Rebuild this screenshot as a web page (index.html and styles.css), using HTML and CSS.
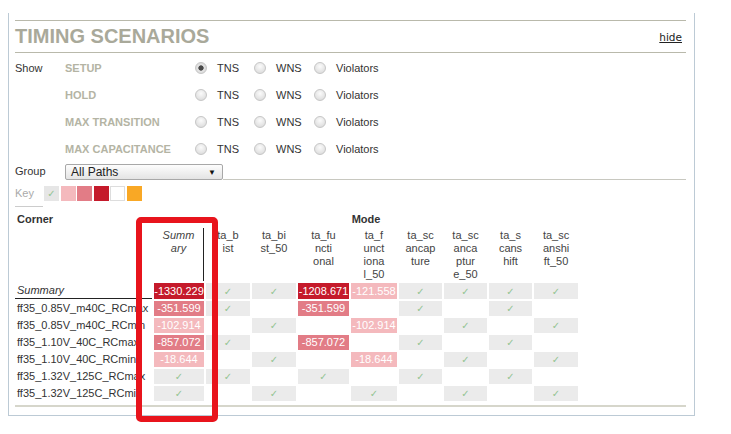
FILE: index.html
```html
<!DOCTYPE html>
<html lang="en">
<head>
    <meta charset="UTF-8">
    <title>Timing Scenarios</title>
    <link rel="stylesheet" href="styles.css">
</head>
<body>
    <div class="panel">
        <div class="title-bar">
            <h1>TIMING SCENARIOS</h1>
            <a class="hide" href="#">hide</a>
        </div>

        <div class="show-grid">
            <span>Show</span>
            <span class="scen">SETUP</span>
            <label class="opt"><input type="radio" name="setup" checked>TNS</label>
            <label class="opt"><input type="radio" name="setup">WNS</label>
            <label class="opt"><input type="radio" name="setup">Violators</label>

            <span></span>
            <span class="scen">HOLD</span>
            <label class="opt"><input type="radio" name="hold">TNS</label>
            <label class="opt"><input type="radio" name="hold">WNS</label>
            <label class="opt"><input type="radio" name="hold">Violators</label>

            <span></span>
            <span class="scen">MAX TRANSITION</span>
            <label class="opt"><input type="radio" name="tran">TNS</label>
            <label class="opt"><input type="radio" name="tran">WNS</label>
            <label class="opt"><input type="radio" name="tran">Violators</label>

            <span></span>
            <span class="scen">MAX CAPACITANCE</span>
            <label class="opt"><input type="radio" name="cap">TNS</label>
            <label class="opt"><input type="radio" name="cap">WNS</label>
            <label class="opt"><input type="radio" name="cap">Violators</label>
        </div>

        <div class="group-row">
            <span class="lbl">Group</span>
            <div class="select"><span>All Paths</span><span class="arrow">▼</span></div>
            <span class="fill"></span>
        </div>

        <div class="key-row">
            <span class="key-lbl">Key</span>
            <div class="swatches">
                <span class="sw ok">✓</span>
                <span class="sw l"></span>
                <span class="sw m"></span>
                <span class="sw d"></span>
                <span class="sw w"></span>
                <span class="sw o"></span>
            </div>
        </div>

        <table class="grid">
            <colgroup>
                <col style="width:137px"><col style="width:50px"><col style="width:44px"><col style="width:44px">
                <col style="width:51px"><col style="width:46px"><col style="width:43px"><col style="width:43px">
                <col style="width:43px"><col style="width:44px">
            </colgroup>
            <tr class="top-row">
                <th class="corner-h">Corner</th>
                <th colspan="9">Mode</th>
            </tr>
            <tr class="head-row">
                <th></th>
                <th class="sum-h">Summ<br>ary</th>
                <th>ta_b<br>ist</th>
                <th>ta_bi<br>st_50</th>
                <th>ta_fu<br>ncti<br>onal</th>
                <th>ta_f<br>unct<br>iona<br>l_50</th>
                <th>ta_sc<br>ancap<br>ture</th>
                <th>ta_sc<br>anca<br>ptur<br>e_50</th>
                <th>ta_s<br>cans<br>hift</th>
                <th>ta_sc<br>anshi<br>ft_50</th>
            </tr>
            <tr class="sum-row">
                <td class="name">Summary</td>
                <td class="d">-1330.229</td><td class="ok">✓</td><td class="ok">✓</td>
                <td class="d">-1208.671</td><td class="l">-121.558</td><td class="ok">✓</td>
                <td class="ok">✓</td><td class="ok">✓</td><td class="ok">✓</td>
            </tr>
            <tr>
                <td class="name">ff35_0.85V_m40C_RCmax</td>
                <td class="m">-351.599</td><td class="ok">✓</td><td></td>
                <td class="m">-351.599</td><td></td><td class="ok">✓</td>
                <td></td><td class="ok">✓</td><td></td>
            </tr>
            <tr>
                <td class="name">ff35_0.85V_m40C_RCmin</td>
                <td class="l">-102.914</td><td></td><td class="ok">✓</td>
                <td></td><td class="l">-102.914</td><td></td>
                <td class="ok">✓</td><td></td><td class="ok">✓</td>
            </tr>
            <tr>
                <td class="name">ff35_1.10V_40C_RCmax</td>
                <td class="m">-857.072</td><td class="ok">✓</td><td></td>
                <td class="m">-857.072</td><td></td><td class="ok">✓</td>
                <td></td><td class="ok">✓</td><td></td>
            </tr>
            <tr>
                <td class="name">ff35_1.10V_40C_RCmin</td>
                <td class="l">-18.644</td><td></td><td class="ok">✓</td>
                <td></td><td class="l">-18.644</td><td></td>
                <td class="ok">✓</td><td></td><td class="ok">✓</td>
            </tr>
            <tr>
                <td class="name">ff35_1.32V_125C_RCmax</td>
                <td class="ok">✓</td><td class="ok">✓</td><td></td>
                <td class="ok">✓</td><td></td><td class="ok">✓</td>
                <td></td><td class="ok">✓</td><td></td>
            </tr>
            <tr>
                <td class="name">ff35_1.32V_125C_RCmin</td>
                <td class="ok">✓</td><td></td><td class="ok">✓</td>
                <td></td><td class="ok">✓</td><td></td>
                <td class="ok">✓</td><td></td><td class="ok">✓</td>
            </tr>
        </table>

        <div class="foot-line"></div>
    </div>

    <!-- annotation box round the Summary column -->
    <div class="mark"></div>
</body>
</html>
```

FILE: styles.css
```css
body {
    margin: 0;
    font-family: 'Liberation Sans', Arial, sans-serif;
    font-size: 11px;
    color: #333;
    background: #fff;
}

.panel {
    box-sizing: border-box;
    margin: 13px 0 0 8px;
    width: 687px;
    height: 403px;
    padding: 7px 8px 0 6px;
    border: 1px solid #bccad5;
    border-top: none;
}

.title-bar {
    display: flex;
    justify-content: space-between;
    align-items: center;
    height: 31px;
    border-top: 1px solid #b9b9ab;
    border-bottom: 1px solid #b9b9ab;
}

h1 {
    margin: 0;
    font-size: 20px;
    line-height: 31px;
    font-weight: bold;
    color: #a9a99a;
}

.hide {
    font-family: 'DejaVu Sans', sans-serif;
    font-size: 10.5px;
    color: #222;
    margin-right: 4px;
}

.show-grid {
    display: grid;
    grid-template-columns: 50px 130px 59px 60px auto;
    grid-auto-rows: 27px;
    align-items: center;
    padding-top: 1px;
}

.scen {
    font-weight: bold;
    color: #b4b4a4;
}

.opt {
    display: flex;
    align-items: center;
    color: #333;
}

.opt input {
    appearance: none;
    width: 12px;
    height: 12px;
    margin: 0 10px 0 0;
    box-sizing: border-box;
    border-radius: 50%;
    border: 1px solid #c6c6c6;
    background: radial-gradient(circle at 50% 35%, #fbfbfb, #d6d6d6);
}

.opt input:checked {
    background: radial-gradient(circle, #4a4a4a 0 2.3px, #e6e6e6 3px, #cfcfcf);
}

.group-row {
    display: flex;
    align-items: flex-end;
    height: 18px;
}

.group-row .lbl {
    width: 50px;
    align-self: center;
}

.select {
    width: 158px;
    height: 16px;
    box-sizing: border-box;
    display: flex;
    justify-content: space-between;
    align-items: center;
    padding: 0 6px 0 5px;
    border: 1px solid #a8a8a8;
    border-radius: 2px;
    background: linear-gradient(#fdfdfd, #e4e4e4);
    font-size: 12px;
    color: #222;
}

.select .arrow {
    font-size: 8px;
    color: #111;
}

.fill {
    flex: 1;
    border-bottom: 1px solid #c8c8c0;
}

.key-row {
    display: flex;
    align-items: flex-start;
}

.key-lbl {
    width: 28px;
    padding: 6px 0 5px;
    line-height: 15px;
    color: #aaa;
    border-bottom: 1px solid #ccc;
}

.swatches {
    display: flex;
    gap: 1.5px;
    margin: 6px 0 0 1px;
}

.sw {
    width: 15px;
    height: 15px;
    box-sizing: border-box;
    text-align: center;
    line-height: 15px;
}

.sw.ok { background: #e6e6e6; color: #93c493; font-family: 'DejaVu Sans', sans-serif; font-size: 10px; }
.sw.l { background: #f4b9bd; }
.sw.m { background: #e27c86; }
.sw.d { background: #c51a2b; }
.sw.w { background: #fff; border: 1px solid #ddd; }
.sw.o { background: #f9a825; }

.grid {
    table-layout: fixed;
    width: 567px;
    border-spacing: 2px;
    margin-left: -2px;
}

.grid th {
    padding: 0;
    font-weight: normal;
    vertical-align: top;
    line-height: 13px;
    color: #444;
}

.grid .top-row {
    height: 17px;
}

.grid .top-row th {
    font-weight: bold;
    vertical-align: bottom;
    color: #333;
}

.top-row .corner-h {
    text-align: left;
    padding-left: 2px;
}

.grid .head-row {
    height: 50px;
}

.head-row th {
    padding-top: 1px;
}

.head-row .sum-h {
    font-style: italic;
    border-right: 1px solid #222;
}

.grid td {
    padding: 0;
    height: 15px;
    line-height: 15px;
    text-align: center;
    white-space: nowrap;
    overflow: hidden;
    color: #fff;
}

.grid td.name {
    text-align: left;
    padding-left: 2px;
    color: #333;
}

.sum-row td.name {
    font-style: italic;
    border-bottom: 1px solid #222;
    box-sizing: border-box;
}

.grid td.ok {
    background: #ebebeb;
    color: #93c493;
    font-family: 'DejaVu Sans', sans-serif;
    font-size: 10px;
}

.grid td.d { background: #c51a2b; }
.grid td.m { background: #e27c86; }
.grid td.l { background: #f4b9bd; }

.foot-line {
    margin-top: 2px;
    border-top: 2px solid #d6d6cb;
}

.mark {
    position: absolute;
    left: 136px;
    top: 217px;
    box-sizing: border-box;
    width: 82px;
    height: 205px;
    border: 6px solid #e8141c;
    border-radius: 5px;
}
```
